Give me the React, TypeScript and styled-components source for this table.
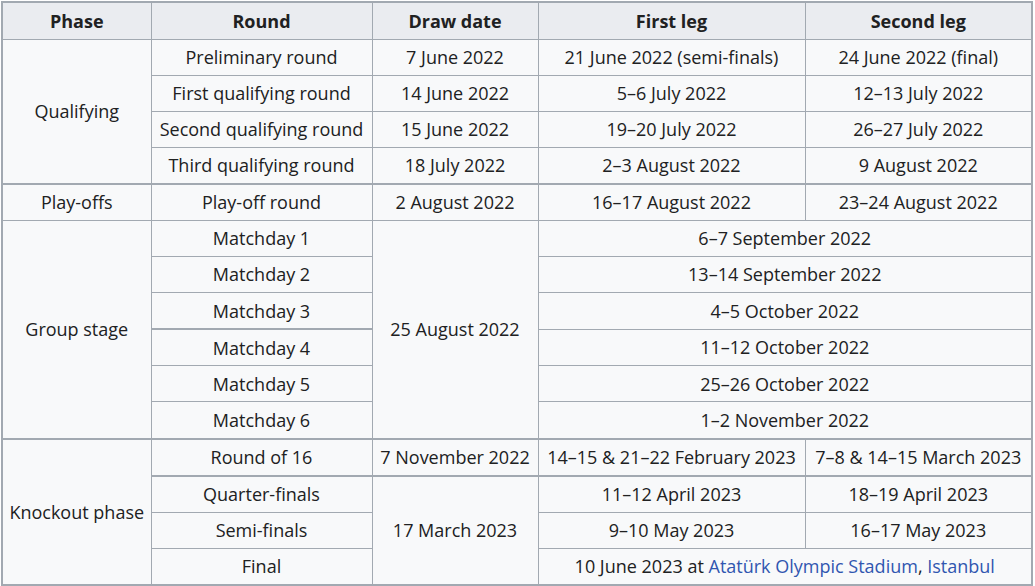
import styled, { createGlobalStyle } from 'styled-components';

const GlobalStyle = createGlobalStyle`
  body {
    margin: 0;
    background: #ffffff;
  }
`;

const Wrap = styled.div`
  padding: 1px 0 0 1px;
`;

const Table = styled.table`
  border-collapse: collapse;
  table-layout: fixed;
  width: 1030px;
  background: #f8f9fa;
  color: #202122;
  font-family: 'Open Sans', 'Noto Sans', sans-serif;
  font-size: 18px;
  border: 2px solid #a2a9b1;
`;

const HeadCell = styled.th`
  background: #eaecf0;
  border: 1px solid #a2a9b1;
  height: 35.5px;
  padding: 0 6px;
  font-weight: 700;
  text-align: center;
  white-space: nowrap;
`;

const Cell = styled.td<{ $thick?: boolean }>`
  border: 1px solid #a2a9b1;
  border-top-width: ${(p) => (p.$thick ? '2px' : '1px')};
  height: 34.1px;
  padding: 1px 4px 0;
  line-height: 1.3;
  text-align: center;
  white-space: nowrap;
`;

const WikiLink = styled.a`
  color: #3056b0;
  text-decoration: none;
`;

const widths = [149, 221, 166, 267, 227];

export default function App() {
  return (
    <>
      <GlobalStyle />
      <Wrap>
        <Table>
          <colgroup>
            {widths.map((w, i) => (
              <col key={i} style={{ width: w }} />
            ))}
          </colgroup>
          <thead>
            <tr>
              <HeadCell>Phase</HeadCell>
              <HeadCell>Round</HeadCell>
              <HeadCell>Draw date</HeadCell>
              <HeadCell>First leg</HeadCell>
              <HeadCell>Second leg</HeadCell>
            </tr>
          </thead>
          <tbody>
            <tr>
              <Cell rowSpan={4}>Qualifying</Cell>
              <Cell>Preliminary round</Cell>
              <Cell>7 June 2022</Cell>
              <Cell>21 June 2022 (semi-finals)</Cell>
              <Cell>24 June 2022 (final)</Cell>
            </tr>
            <tr>
              <Cell>First qualifying round</Cell>
              <Cell>14 June 2022</Cell>
              <Cell>5–6 July 2022</Cell>
              <Cell>12–13 July 2022</Cell>
            </tr>
            <tr>
              <Cell>Second qualifying round</Cell>
              <Cell>15 June 2022</Cell>
              <Cell>19–20 July 2022</Cell>
              <Cell>26–27 July 2022</Cell>
            </tr>
            <tr>
              <Cell>Third qualifying round</Cell>
              <Cell>18 July 2022</Cell>
              <Cell>2–3 August 2022</Cell>
              <Cell>9 August 2022</Cell>
            </tr>
            <tr>
              <Cell $thick>Play-offs</Cell>
              <Cell $thick>Play-off round</Cell>
              <Cell $thick>2 August 2022</Cell>
              <Cell $thick>16–17 August 2022</Cell>
              <Cell $thick>23–24 August 2022</Cell>
            </tr>
            <tr>
              <Cell rowSpan={6}>Group stage</Cell>
              <Cell>Matchday 1</Cell>
              <Cell rowSpan={6}>25 August 2022</Cell>
              <Cell colSpan={2}>6–7 September 2022</Cell>
            </tr>
            <tr>
              <Cell>Matchday 2</Cell>
              <Cell colSpan={2}>13–14 September 2022</Cell>
            </tr>
            <tr>
              <Cell>Matchday 3</Cell>
              <Cell colSpan={2}>4–5 October 2022</Cell>
            </tr>
            <tr>
              <Cell $thick>Matchday 4</Cell>
              <Cell colSpan={2}>11–12 October 2022</Cell>
            </tr>
            <tr>
              <Cell>Matchday 5</Cell>
              <Cell colSpan={2}>25–26 October 2022</Cell>
            </tr>
            <tr>
              <Cell>Matchday 6</Cell>
              <Cell colSpan={2}>1–2 November 2022</Cell>
            </tr>
            <tr>
              <Cell $thick rowSpan={4}>Knockout phase</Cell>
              <Cell $thick>Round of 16</Cell>
              <Cell $thick>7 November 2022</Cell>
              <Cell $thick>14–15 &amp; 21–22 February 2023</Cell>
              <Cell $thick>7–8 &amp; 14–15 March 2023</Cell>
            </tr>
            <tr>
              <Cell $thick>Quarter-finals</Cell>
              <Cell $thick rowSpan={3}>17 March 2023</Cell>
              <Cell $thick>11–12 April 2023</Cell>
              <Cell $thick>18–19 April 2023</Cell>
            </tr>
            <tr>
              <Cell>Semi-finals</Cell>
              <Cell>9–10 May 2023</Cell>
              <Cell>16–17 May 2023</Cell>
            </tr>
            <tr>
              <Cell>Final</Cell>
              <Cell colSpan={2}>
                10 June 2023 at <WikiLink href="#">Atatürk Olympic Stadium</WikiLink>,{' '}
                <WikiLink href="#">Istanbul</WikiLink>
              </Cell>
            </tr>
          </tbody>
        </Table>
      </Wrap>
    </>
  );
}
